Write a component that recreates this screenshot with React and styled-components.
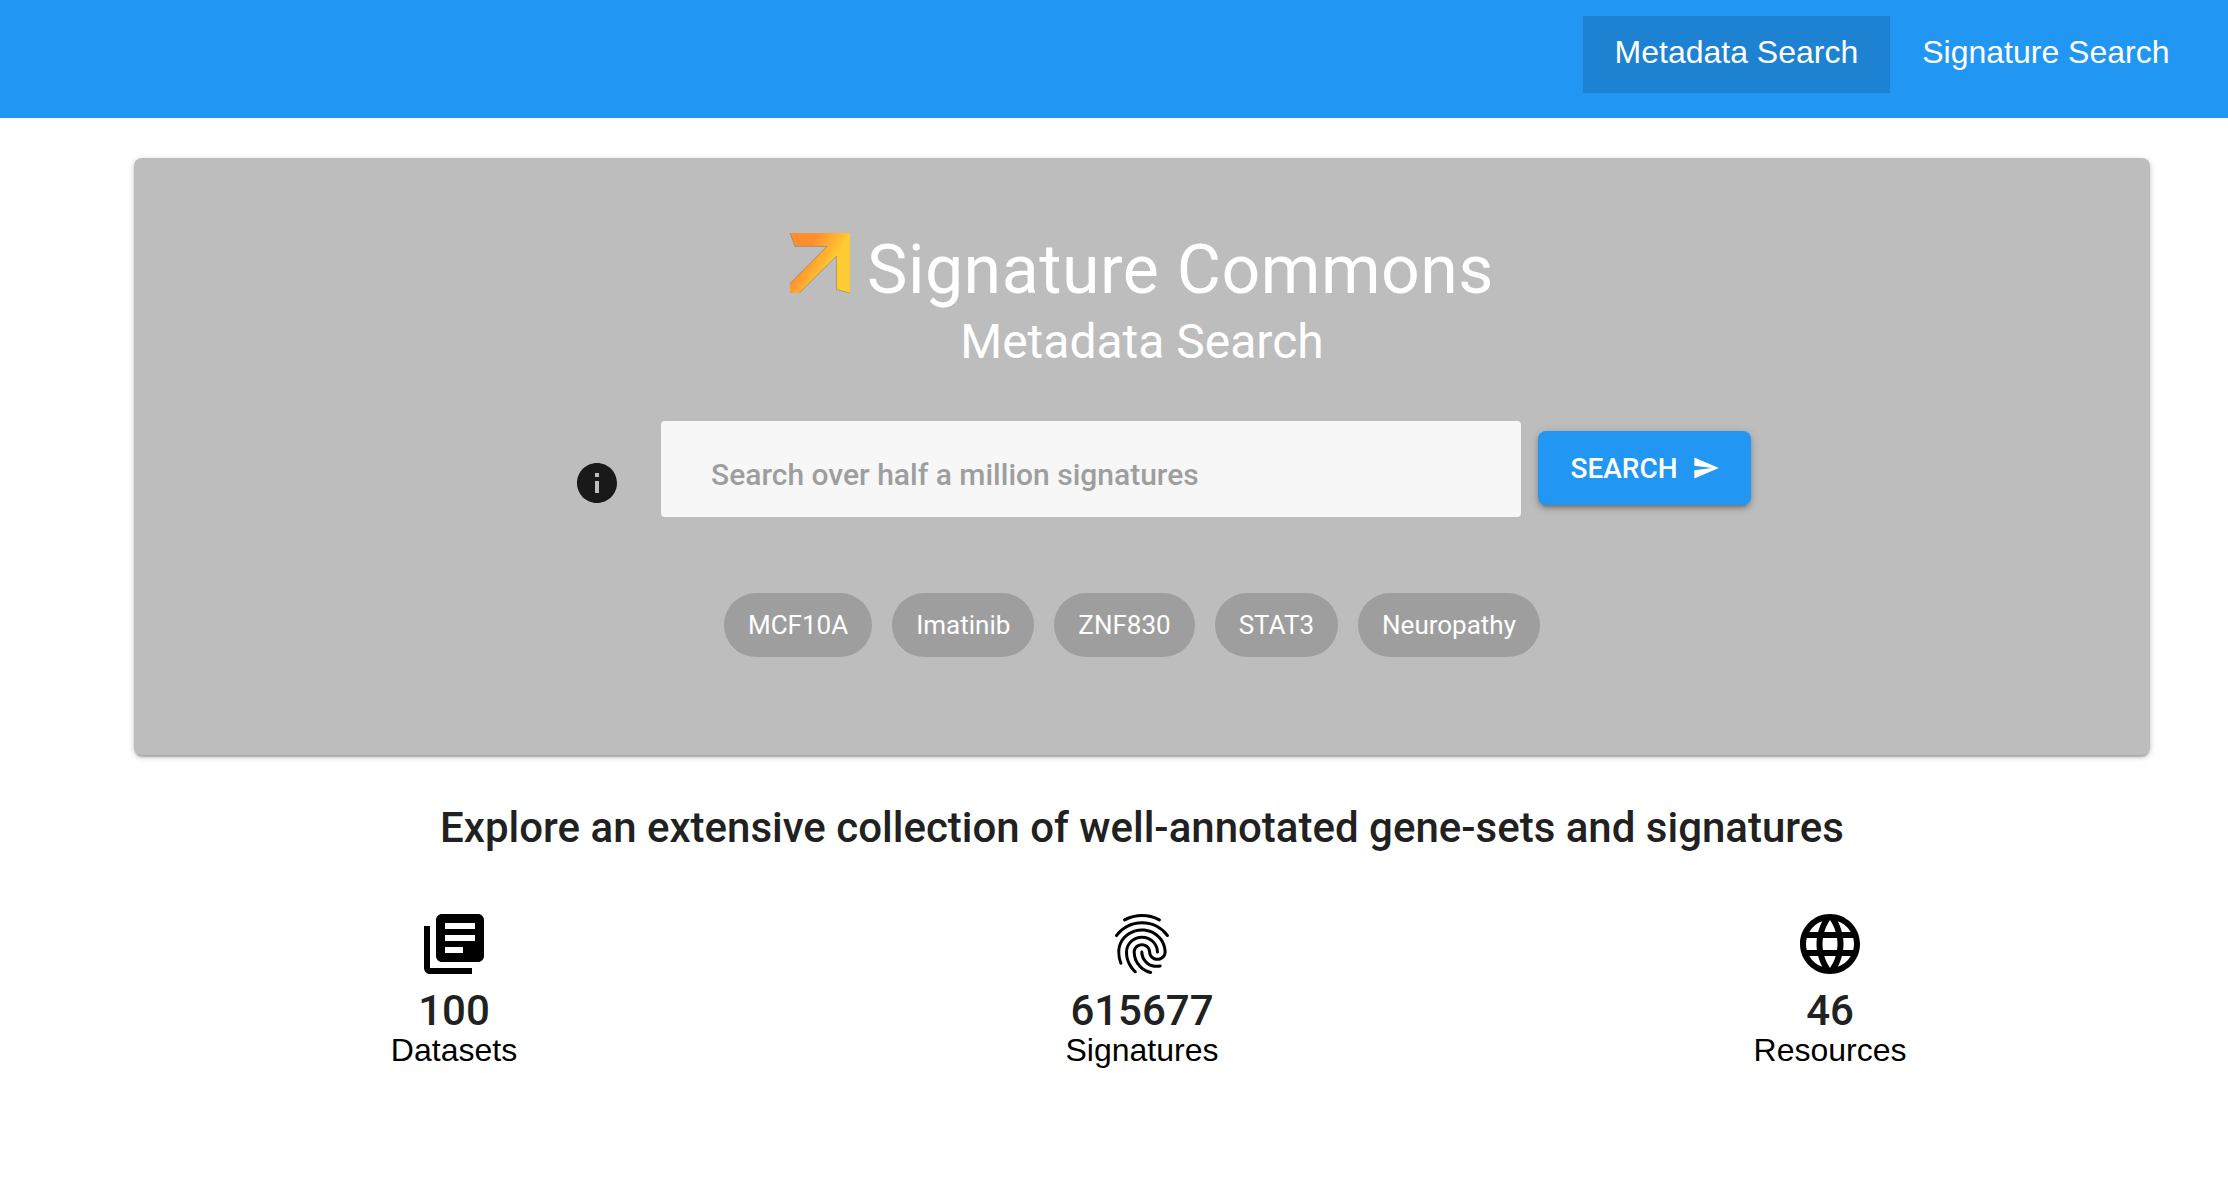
import React from "react";
import styled, { createGlobalStyle } from "styled-components";
import { MdFingerprint, MdInfo, MdLanguage, MdLibraryBooks, MdSend } from "react-icons/md";

const GlobalStyle = createGlobalStyle`
  *, *::before, *::after { box-sizing: border-box; }
  body {
    margin: 0;
    background: #fff;
    color: #000;
    font-family: "Liberation Sans", Arial, Helvetica, sans-serif;
    font-size: 32px;
  }
`;

const Page = styled.div`
  min-height: 1186px;
  overflow: hidden;
`;

const Header = styled.header`
  display: flex;
  justify-content: flex-end;
  height: 118px;
  padding: 16px 26.5px 0 0;
  background: #2196f3;
`;

const NavLink = styled.a`
  height: 77px;
  padding: 0 32px;
  line-height: 73px;
  color: #fff;
  text-decoration: none;
  white-space: nowrap;
  background: ${(p) => (p.$active ? "#1e82d3" : "transparent")};
`;

const Hero = styled.section`
  display: flex;
  flex-direction: column;
  align-items: center;
  width: 2016px;
  height: 597px;
  margin: 40px 0 0 134px;
  padding-top: 70px;
  border-radius: 8px;
  background: #bdbdbd;
  color: #fff;
  font-family: Roboto, sans-serif;
  box-shadow: 0 2px 6px rgba(0, 0, 0, 0.2), 0 2px 2px rgba(0, 0, 0, 0.14), 0 4px 2px -2px rgba(0, 0, 0, 0.12);
`;

const Brand = styled.div`
  display: flex;
  align-items: flex-start;
  height: 85px;
`;

const Logo = styled.svg`
  width: 60px;
  height: 60px;
  margin: 5px 17px 0 0;
  overflow: visible;
`;

const Title = styled.h1`
  margin: 1px 0 0;
  font-size: 68px;
  font-weight: 400;
  line-height: 82px;
  letter-spacing: 0.5px;
`;

const Subtitle = styled.h2`
  margin: 0;
  font-size: 48px;
  font-weight: 400;
  line-height: 58px;
`;

const SearchRow = styled.form`
  display: flex;
  align-items: flex-start;
  align-self: flex-start;
  height: 96px;
  margin: 50px 0 0 439px;
`;

const InfoIcon = styled(MdInfo)`
  width: 48px;
  height: 48px;
  margin: 38px 40px 0 0;
  color: #191919;
`;

const SearchInput = styled.input`
  width: 860px;
  height: 96px;
  padding: 10px 50px 0;
  border: 0;
  border-radius: 4px;
  background: #f7f7f7;
  font: 500 30px Roboto, sans-serif;
  outline: none;

  &::placeholder {
    color: #9e9e9e;
    opacity: 1;
  }
`;

const SearchButton = styled.button`
  display: flex;
  align-items: center;
  gap: 14px;
  width: 213px;
  height: 74px;
  margin: 10px 0 0 17px;
  padding: 0 0 0 32.5px;
  border: 0;
  border-radius: 8px;
  background: #2196f3;
  color: #fff;
  font: 500 28px Roboto, sans-serif;
  box-shadow: 0 2px 10px rgba(0, 0, 0, 0.2), 0 4px 4px rgba(0, 0, 0, 0.14), 0 6px 2px -4px rgba(0, 0, 0, 0.12);

  svg {
    width: 28px;
    height: 28px;
  }
`;

const Chips = styled.div`
  display: flex;
  gap: 20px;
  align-self: flex-start;
  margin: 76px 0 0 590px;
`;

const Chip = styled.span`
  height: 64px;
  padding: 0 24px;
  border-radius: 32px;
  background: #9e9e9e;
  font-size: 26px;
  line-height: 64px;
`;

const Headline = styled.h3`
  margin: 48px 0 0 134px;
  width: 2016px;
  color: #212121;
  font: 500 42px/50px Roboto, sans-serif;
  text-align: center;
`;

const Stats = styled.div`
  display: grid;
  grid-template-columns: repeat(3, 688px);
  margin: 55px 0 0 110px;
`;

const Stat = styled.div`
  display: flex;
  flex-direction: column;
  align-items: center;

  svg {
    width: 72px;
    height: 72px;
  }
`;

const StatValue = styled.strong`
  margin-top: 7px;
  color: #212121;
  font: 500 42px/48px Roboto, sans-serif;
`;

const StatLabel = styled.span`
  line-height: 32px;
  margin-top: -1px;
`;

const suggestions = ["MCF10A", "Imatinib", "ZNF830", "STAT3", "Neuropathy"];

const stats = [
  { icon: MdLibraryBooks, value: "100", label: "Datasets" },
  { icon: MdFingerprint, value: "615677", label: "Signatures" },
  { icon: MdLanguage, value: "46", label: "Resources" },
];

export default function App() {
  return (
    <Page>
      <GlobalStyle />
      <Header>
        <NavLink $active>Metadata Search</NavLink>
        <NavLink>Signature Search</NavLink>
      </Header>
      <Hero>
        <Brand>
          <Logo viewBox="0 0 60 60">
            <defs>
              <linearGradient id="arrow" gradientUnits="userSpaceOnUse" x1="24" y1="8" x2="48" y2="22">
                <stop offset="0" stopColor="#ff8f2e" />
                <stop offset="1" stopColor="#ffcb33" />
              </linearGradient>
            </defs>
            <path fill="url(#arrow)" d="M0 0H60V60L46.5 56.5V23L9.5 60H0V50.5L37 13.2H5Z" />
            <path
              fill="none"
              stroke="#6b6252"
              strokeOpacity="0.6"
              strokeWidth="0.7"
              d="M0 0L5 13.4H37L0 50.5M9.5 60L46.5 23V56.5L60 60"
            />
          </Logo>
          <Title>Signature Commons</Title>
        </Brand>
        <Subtitle>Metadata Search</Subtitle>
        <SearchRow onSubmit={(e) => e.preventDefault()}>
          <InfoIcon />
          <SearchInput placeholder="Search over half a million signatures" />
          <SearchButton type="submit">
            SEARCH
            <MdSend />
          </SearchButton>
        </SearchRow>
        <Chips>
          {suggestions.map((s) => (
            <Chip key={s}>{s}</Chip>
          ))}
        </Chips>
      </Hero>
      <Headline>Explore an extensive collection of well-annotated gene-sets and signatures</Headline>
      <Stats>
        {stats.map(({ icon: Icon, value, label }) => (
          <Stat key={label}>
            <Icon />
            <StatValue>{value}</StatValue>
            <StatLabel>{label}</StatLabel>
          </Stat>
        ))}
      </Stats>
    </Page>
  );
}
